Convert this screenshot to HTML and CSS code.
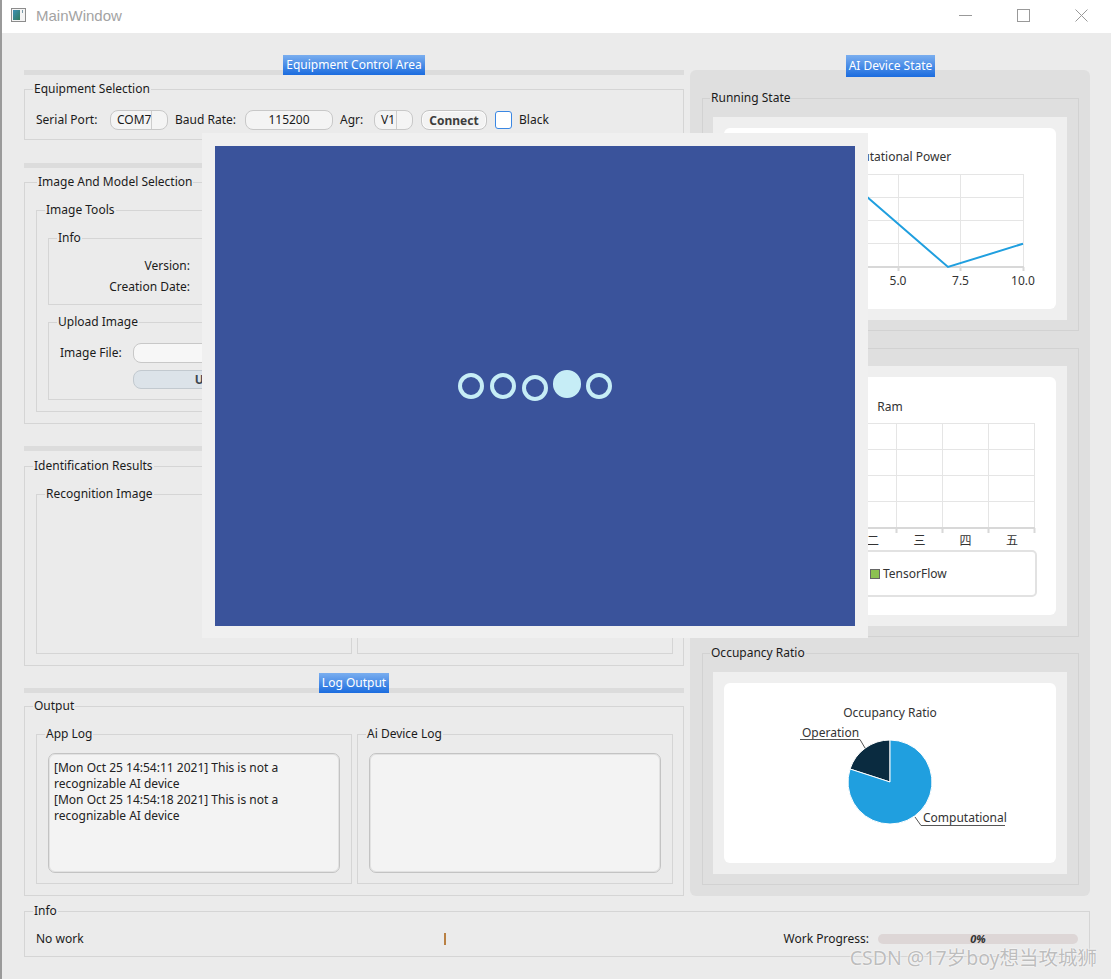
FILE: index.html
```html
<!DOCTYPE html>
<html lang="en">
<head>
    <meta charset="UTF-8">
    <title>MainWindow</title>
    <link rel="stylesheet" href="styles.css">
</head>
<body>
<div class="window">
    <header class="titlebar">
        <svg class="app-icon" width="15" height="14" viewBox="0 0 15 14">
            <defs>
                <linearGradient id="iconFill" x1="0" y1="0" x2="1" y2="1">
                    <stop offset="0" stop-color="#3c8fb4"/>
                    <stop offset="1" stop-color="#2e7a5e"/>
                </linearGradient>
            </defs>
            <rect x="0.5" y="0.5" width="14" height="13" fill="#f4f4f4" stroke="#8c8c8c"/>
            <rect x="2" y="2" width="7" height="10" fill="url(#iconFill)"/>
            <rect x="11" y="2" width="1" height="3" fill="#7a9aa8"/>
        </svg>
        <span class="title">MainWindow</span>
        <div class="caption-buttons">
            <span class="cap-btn"><svg width="13" height="12" viewBox="0 0 13 12"><path d="M0 6.5h13" stroke="#999" fill="none"/></svg></span>
            <span class="cap-btn"><svg width="13" height="13" viewBox="0 0 13 13"><rect x="0.5" y="0.5" width="12" height="12" stroke="#999" fill="none"/></svg></span>
            <span class="cap-btn"><svg width="13" height="13" viewBox="0 0 13 13"><path d="M0.5 0.5l12 12M12.5 0.5l-12 12" stroke="#999" fill="none"/></svg></span>
        </div>
    </header>

    <main class="content">
        <div class="columns">
            <div class="left-col">
                <section class="section">
                    <div class="section-head"><span class="section-title">Equipment Control Area</span></div>
                    <fieldset class="group equip">
                        <legend>Equipment Selection</legend>
                        <div class="equip-row">
                            <span class="lbl lbl-port">Serial Port:</span>
                            <span class="combo combo-port"><span class="combo-text">COM7</span><span class="combo-arrow"></span></span>
                            <span class="lbl lbl-baud">Baud Rate:</span>
                            <span class="combo combo-baud"><span class="combo-text">115200</span></span>
                            <span class="lbl lbl-agr">Agr:</span>
                            <span class="combo combo-agr"><span class="combo-text">V1</span><span class="combo-arrow"></span></span>
                            <button class="btn-connect">Connect</button>
                            <span class="checkbox"></span>
                            <span class="lbl">Black</span>
                        </div>
                    </fieldset>
                </section>

                <section class="section section-model">
                    <div class="section-head"><span class="section-title">Model Control Area</span></div>
                    <fieldset class="group model">
                        <legend>Image And Model Selection</legend>
                        <div class="model-row">
                            <fieldset class="group tools">
                                <legend>Image Tools</legend>
                                <fieldset class="group info-box">
                                    <legend>Info</legend>
                                    <div class="form-grid">
                                        <span class="form-lbl">Version:</span><span class="form-val"></span>
                                        <span class="form-lbl">Creation Date:</span><span class="form-val"></span>
                                    </div>
                                </fieldset>
                                <fieldset class="group upload">
                                    <legend>Upload Image</legend>
                                    <div class="file-row">
                                        <span class="file-lbl">Image File:</span>
                                        <span class="file-input"></span>
                                    </div>
                                    <button class="btn-upload">Upload</button>
                                </fieldset>
                            </fieldset>
                            <fieldset class="group tools-side">
                                <legend>Model Tools</legend>
                            </fieldset>
                        </div>
                    </fieldset>
                </section>

                <section class="section">
                    <div class="section-head"><span class="section-title">Result Display Area</span></div>
                    <fieldset class="group ident">
                        <legend>Identification Results</legend>
                        <div class="pair">
                            <fieldset class="group sub-box"><legend>Recognition Image</legend></fieldset>
                            <fieldset class="group sub-box"><legend>Recognition Result</legend></fieldset>
                        </div>
                    </fieldset>
                </section>

                <section class="section">
                    <div class="section-head"><span class="section-title">Log Output</span></div>
                    <fieldset class="group output">
                        <legend>Output</legend>
                        <div class="pair">
                            <fieldset class="group log-box">
                                <legend>App Log</legend>
                                <div class="log-text">[Mon Oct 25 14:54:11 2021] This is not a recognizable AI device<br>[Mon Oct 25 14:54:18 2021] This is not a recognizable AI device</div>
                            </fieldset>
                            <fieldset class="group log-box">
                                <legend>Ai Device Log</legend>
                                <div class="log-text"></div>
                            </fieldset>
                        </div>
                    </fieldset>
                </section>
            </div>

            <div class="right-col">
                <div class="state-panel">
                    <div class="state-title">AI Device State</div>

                    <fieldset class="group state-group">
                        <legend>Running State</legend>
                        <div class="chart-view view-power">
                            <svg class="chart" width="332" height="181" viewBox="0 0 332 181">
                                <text class="chart-title" x="166" y="33">Computational Power</text>
                                <path class="grid" d="M49.5 46V139M111.5 46V139M174.5 46V139M236.5 46V139M299.5 46V139M49 46.5H300M49 69.5H300M49 92.5H300M49 115.5H300"/>
                                <path class="axis" d="M49 139H300M49.5 139v4M111.5 139v4M174.5 139v4M236.5 139v4M299.5 139v4"/>
                                <g class="ticks-x">
                                    <text x="49" y="157">0.0</text>
                                    <text x="111.5" y="157">2.5</text>
                                    <text x="174" y="157">5.0</text>
                                    <text x="236.5" y="157">7.5</text>
                                    <text x="299" y="157">10.0</text>
                                </g>
                                <g class="ticks-y">
                                    <text x="42" y="143">0.0</text>
                                    <text x="42" y="120">1.0</text>
                                    <text x="42" y="97">2.0</text>
                                    <text x="42" y="74">3.0</text>
                                    <text x="42" y="50">4.0</text>
                                </g>
                                <polyline class="series" points="49,92.5 86.5,69.25 120,49 224,139 299,115.75"/>
                            </svg>
                        </div>
                    </fieldset>

                    <fieldset class="group state-group state-mid">
                        <legend>Memory Usage</legend>
                        <div class="chart-view view-ram">
                            <svg class="chart" width="332" height="238" viewBox="0 0 332 238">
                                <text class="chart-title" x="166" y="34">Ram</text>
                                <path class="grid" d="M80.5 46V151M126.5 46V151M172.5 46V151M218.5 46V151M264.5 46V151M310.5 46V151M80 46.5H311M80 72.5H311M80 98.5H311M80 124.5H311"/>
                                <path class="axis" d="M80 151H311M80.5 151v5M126.5 151v5M172.5 151v5M218.5 151v5M264.5 151v5M310.5 151v5"/>
                                <g class="ticks-x">
                                    <text x="103" y="168">一</text>
                                    <text x="149" y="168">二</text>
                                    <text x="195.5" y="168">三</text>
                                    <text x="241.5" y="168">四</text>
                                    <text x="288" y="168">五</text>
                                </g>
                                <g class="ticks-y">
                                    <text x="72" y="155">0</text>
                                    <text x="72" y="129">25</text>
                                    <text x="72" y="103">50</text>
                                    <text x="72" y="76">75</text>
                                    <text x="72" y="50">100</text>
                                </g>
                                <rect class="legend-box" x="40" y="174" width="272" height="45" rx="4"/>
                                <rect x="80.5" y="192.5" width="9" height="9" fill="#209fdf" stroke="#666"/>
                                <text x="94" y="201">PyTorch</text>
                                <rect x="146.5" y="192.5" width="9" height="9" fill="#8cc152" stroke="#666"/>
                                <text x="159" y="201">TensorFlow</text>
                            </svg>
                        </div>
                    </fieldset>

                    <fieldset class="group state-group state-low">
                        <legend>Occupancy Ratio</legend>
                        <div class="chart-view view-pie">
                            <svg class="chart" width="332" height="180" viewBox="0 0 332 180">
                                <text class="chart-title" x="166" y="34">Occupancy Ratio</text>
                                <path class="slice" fill="#0a2b40" d="M166 99L166 57A42 42 0 0 0 126.06 86.02Z"/>
                                <path class="slice" fill="#209fdf" d="M166 99L126.06 86.02A42 42 0 1 0 166 57Z"/>
                                <text x="78" y="54">Operation</text>
                                <path class="leader" d="M76 56.5H136L141 65"/>
                                <text x="199" y="139">Computational</text>
                                <path class="leader" d="M191 134L197 142.5H281"/>
                            </svg>
                        </div>
                    </fieldset>
                </div>
            </div>
        </div>

        <fieldset class="group info">
            <legend>Info</legend>
            <div class="info-row">
                <span class="status-text">No work</span>
                <span class="status-mark"></span>
                <span class="progress-lbl">Work Progress:</span>
                <span class="progress"><span class="progress-text">0%</span></span>
            </div>
        </fieldset>
    </main>

    <div class="overlay">
        <div class="screen">
            <span class="ring"></span>
            <span class="ring"></span>
            <span class="ring ring-soft"></span>
            <span class="ring ring-full"></span>
            <span class="ring"></span>
        </div>
    </div>

    <div class="watermark">CSDN @17岁boy想当攻城狮</div>
</div>
</body>
</html>
```

FILE: styles.css
```css
* {
    box-sizing: border-box;
}

html, body {
    margin: 0;
    padding: 0;
}

body {
    width: 1111px;
    height: 979px;
    overflow: hidden;
    background: #ebebeb;
    font: 12px/14px "Noto Sans", "Noto Sans CJK SC", sans-serif;
    color: #1b1b1b;
}

.window {
    position: relative;
    height: 979px;
    border-left: 2px solid #9a9a9a;
}

/* title bar */
.titlebar {
    height: 33px;
    background: #fff;
    display: flex;
    align-items: center;
    padding: 0 0 3px 9px;
}

.title {
    margin-left: 10px;
    font: 15px "Liberation Sans", sans-serif;
    color: #a3a3a3;
}

.caption-buttons {
    margin-left: auto;
    display: flex;
    padding-right: 1px;
}

.cap-btn {
    width: 58px;
    height: 30px;
    display: flex;
    align-items: center;
    justify-content: center;
}

/* layout */
.content {
    padding: 22px 21px 0 22px;
}

.columns {
    display: flex;
    gap: 6px;
    align-items: flex-start;
}

.left-col {
    width: 660px;
}

.right-col {
    width: 400px;
}

/* group boxes */
.group {
    margin: 0;
    padding: 0;
    min-width: 0;
    border: 1px solid #d5d5d5;
}

.group > legend {
    margin-left: -3px;
    padding: 0 1px;
    line-height: 14px;
}

/* section headers */
.section + .section {
    margin-top: 7px;
}

.section-model {
    margin-top: 8px !important;
}

.section-head {
    height: 20px;
    text-align: center;
    background: linear-gradient(to bottom, transparent 15px, #dcdcdc 15px);
}

.section-title,
.state-title {
    display: inline-block;
    height: 20px;
    line-height: 20px;
    padding: 0 3px;
    color: #fff;
    background: linear-gradient(#7aaeef, #1b6cdf);
}

.section-head + .group {
    margin-top: 7px;
}

/* equipment selection */
.equip {
    padding: 14px 10px 9px 11px;
}

.equip-row {
    display: flex;
    align-items: center;
    gap: 7px;
    height: 20px;
}

.lbl-port { width: 67px; }
.lbl-baud { width: 63px; }
.lbl-agr { width: 27px; }

.combo {
    display: flex;
    height: 20px;
    background: #f4f4f4;
    border: 1px solid #c8c8c8;
    border-radius: 8px;
    line-height: 18px;
}

.combo-text {
    padding-left: 6px;
    flex: 1;
}

.combo-arrow {
    width: 16px;
    border-left: 1px solid #cdcdcd;
}

.combo-port { width: 58px; }
.combo-agr { width: 39px; }

.combo-baud {
    width: 88px;
    justify-content: center;
}

.combo-baud .combo-text {
    padding: 0;
    text-align: center;
}

.btn-connect {
    margin-left: 1px;
    width: 66px;
    height: 20px;
    padding: 0;
    font: bold 12px "Noto Sans", sans-serif;
    color: #3d3d3d;
    background: #f3f3f3;
    border: 1px solid #c4c4c4;
    border-radius: 8px;
    box-shadow: inset 0 0 0 1px #fbfbfb;
}

.checkbox {
    margin-left: 1px;
    width: 17px;
    height: 18px;
    border: 1px solid #3a87e3;
    border-radius: 3px;
    background: #fff;
}

/* image and model selection */
.model {
    padding: 14px 11px 11px 11px;
}

.model > legend {
    margin-left: 1px;
}

.model-row {
    display: flex;
    gap: 5px;
}

.tools {
    width: 287px;
    padding: 14px 11px 11px 11px;
}

.tools-side {
    flex: 1;
    padding: 13px 11px 11px 11px;
}

.info-box {
    padding: 11px 11px 7px 11px;
}

.form-grid {
    display: grid;
    grid-template-columns: 130px 1fr;
    grid-auto-rows: 20px;
    row-gap: 1px;
    column-gap: 8px;
    align-items: center;
}

.form-lbl {
    text-align: right;
}

.upload {
    margin-top: 10px;
    padding: 14px 11px 10px 11px;
}

.file-row {
    display: flex;
    align-items: center;
    height: 20px;
}

.file-lbl {
    width: 73px;
}

.file-input {
    flex: 1;
    height: 20px;
    background: #f7f7f7;
    border: 1px solid #c8c8c8;
    border-radius: 8px;
}

.btn-upload {
    display: block;
    margin: 7px 0 0 73px;
    width: calc(100% - 73px);
    height: 19px;
    padding: 0;
    font: bold 12px "Noto Sans", sans-serif;
    color: #3d4650;
    background: #dce3e9;
    border: 1px solid #c2c9cf;
    border-radius: 8px;
}

/* identification */
.section-head + .ident {
    margin-top: 8px;
}

.ident {
    padding: 14px 10px 11px 11px;
}

.pair {
    display: flex;
    gap: 5px;
}

.sub-box {
    flex: 1;
    height: 167px;
    padding: 0 11px;
}

/* log output */
.section-head + .output {
    margin-top: 6px;
}

.output {
    padding: 14px 10px 11px 11px;
}

.log-box {
    flex: 1;
    padding: 12px 11px 10px 11px;
}

.log-text {
    height: 120px;
    padding: 6px 5px;
    line-height: 16px;
    background: #f3f3f3;
    border: 1px solid #c3c3c3;
    border-radius: 7px;
    box-shadow: inset 0 0 0 1px #e2e2e2;
    color: #222;
}

/* right panel */
.state-panel {
    display: flow-root;
    margin-top: 15px;
    padding: 0 11px 11px 12px;
    background: #dfdfdf;
    border-radius: 6px;
}

.state-title {
    display: table;
    margin: -15px auto 0;
    height: 22px;
    line-height: 22px;
}

.state-group {
    margin-top: 14px;
    padding: 12px 11px 10px 10px;
    border-color: #d2d2d2;
}

.state-mid {
    margin-top: 10px;
    padding-top: 11px;
}

.state-low {
    margin-top: 9px;
}

.chart-view {
    background: #efefef;
    padding: 11px;
}

.chart {
    display: block;
    background: #fff;
    border-radius: 6px;
}

.chart text {
    font-family: "Noto Sans", "Noto Sans CJK SC", sans-serif;
    font-size: 12px;
    fill: #333;
}

.chart .chart-title,
.chart .ticks-x text {
    text-anchor: middle;
}

.chart .ticks-y text {
    text-anchor: end;
}

.chart .grid {
    fill: none;
    stroke: #e5e5e5;
}

.chart .axis {
    fill: none;
    stroke: #d8d8d8;
    stroke-width: 2;
}

.chart .series {
    fill: none;
    stroke: #209fdf;
    stroke-width: 2;
}

.chart .legend-box {
    fill: #fff;
    stroke: #e2e2e2;
    stroke-width: 2;
}

.chart .slice {
    stroke: #fff;
    stroke-width: 1;
}

.chart .leader {
    fill: none;
    stroke: #555;
}

/* info bar */
.info {
    margin-top: 8px;
    padding: 11px 11px 7px 11px;
}

.info-row {
    display: flex;
    align-items: center;
    height: 20px;
}

.status-text {
    width: 408px;
}

.status-mark {
    width: 2px;
    height: 12px;
    background: #b98043;
}

.progress-lbl {
    margin-left: auto;
    margin-right: 9px;
}

.progress {
    width: 200px;
    height: 10px;
    border-radius: 5px;
    background: #ddd6d6;
    display: flex;
    align-items: center;
    justify-content: center;
}

.progress-text {
    font: italic bold 11px/10px "Noto Sans", sans-serif;
    color: #333;
}

/* modal loader */
.overlay {
    position: absolute;
    left: 200px;
    top: 133px;
    width: 666px;
    height: 505px;
    padding: 13px;
    background: #f0f0f0;
}

.screen {
    width: 640px;
    height: 480px;
    background: #3a539b;
    display: flex;
    align-items: center;
    justify-content: center;
    gap: 6px;
}

.ring {
    width: 26px;
    height: 26px;
    border: 4px solid #c6edf6;
    border-radius: 50%;
}

.ring-soft {
    transform: translateY(2px);
    filter: blur(0.6px);
}

.ring-full {
    background: #c6edf6;
    transform: translateY(-2px) scale(1.08);
    filter: blur(0.4px);
}

.watermark {
    position: absolute;
    right: 14px;
    top: 945px;
    font-size: 19.5px;
    line-height: 26px;
    color: #bdbdbd;
    text-shadow: 0 0 2px #fff, 0 0 1px #fff;
}
```
